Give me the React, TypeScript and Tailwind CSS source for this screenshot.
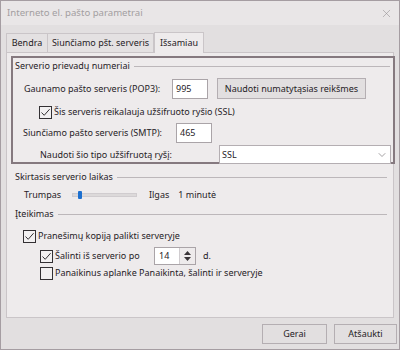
import { X, ChevronDown } from 'lucide-react'

const font = { fontFamily: '"Noto Sans", "Open Sans", sans-serif' }

function Check({ checked }: { checked: boolean }) {
  return (
    <span className="w-[13px] h-[13px] border border-[#333033] bg-[#f2f0f1] flex items-center justify-center shrink-0">
      {checked && (
        <svg width="11" height="11" viewBox="0 0 11 11">
          <path d="M1.5 5.5 L4.2 8.3 L9.6 2.2" fill="none" stroke="#333033" strokeWidth="1" />
        </svg>
      )}
    </span>
  )
}

function GroupHeader({ label }: { label: string }) {
  return (
    <div className="flex items-center h-[14px]">
      <span className="pr-[4px]">{label}</span>
      <span className="flex-1 border-t border-[#bcb7ba] mr-[3px]"></span>
    </div>
  )
}

export default function App() {
  return (
    <div
      style={font}
      className="w-[400px] h-[350px] border border-[#a59da2] bg-[#e2dfe0] flex flex-col text-[9px] text-[#262226] overflow-hidden whitespace-nowrap"
    >
      {/* Title bar */}
      <div className="h-[24px] bg-[#e9e6e7] flex items-center justify-between pl-[6px] pr-[6px] shrink-0">
        <span className="text-[9.6px] text-[#a39ea1]">Interneto el. pašto parametrai</span>
        <X size={13} strokeWidth={1} className="text-[#8e898c]" />
      </div>

      {/* Tabs */}
      <div className="flex items-end h-[27px] pl-[5px] shrink-0">
        <div className="w-[42px] h-[19px] border border-b-0 border-[#cac5c8] bg-[#e4e1e2] flex items-center justify-center">Bendra</div>
        <div className="w-[106px] h-[19px] border border-b-0 border-l-0 border-[#cac5c8] bg-[#e4e1e2] flex items-center justify-center">Siunčiamo pšt. serveris</div>
        <div className="w-[50px] h-[21px] border border-b-0 border-[#cac5c8] bg-[#eeebec] flex items-center justify-center -mb-px relative">Išsamiau</div>
      </div>

      {/* Tab panel */}
      <div className="mx-[5px] h-[266px] border border-[#cac5c8] bg-[#eeebec] pt-[3px] shrink-0">
        {/* Highlighted group */}
        <div className="ml-[4px] w-[384px] h-[108px] border-2 border-[#85797f] pt-[1px] pl-[2px]">
          <GroupHeader label="Serverio prievadų numeriai" />

          <div className="flex items-center h-[21px] mt-[5px] pl-[9px]">
            <span className="w-[148px]">Gaunamo pašto serveris (POP3):</span>
            <span className="w-[36px] h-[20px] border border-[#aaa4a8] bg-white flex items-center pl-[3px]">995</span>
            <button className="ml-[9px] w-[149px] h-[21px] border border-[#b4aeb2] bg-[#e2dfe0] flex items-center justify-center">
              Naudoti numatytąsias reikšmes
            </button>
          </div>

          <div className="flex items-center gap-[2px] h-[14px] mt-[6px] pl-[24px]">
            <Check checked />
            <span>Šis serveris reikalauja užšifruoto ryšio (SSL)</span>
          </div>

          <div className="flex items-center h-[20px] mt-[4px] pl-[8px]">
            <span className="w-[153px]">Siunčiamo pašto serveris (SMTP):</span>
            <span className="w-[36px] h-[20px] border border-[#aaa4a8] bg-white flex items-center pl-[3px]">465</span>
          </div>

          <div className="flex items-center h-[19px] mt-[2px] pl-[25px]">
            <span className="w-[179px]">Naudoti šio tipo užšifruotą ryšį:</span>
            <span className="w-[172px] h-[19px] border border-[#b4aeb2] bg-white flex items-center justify-between">
              <span className="pl-[2px]">SSL</span>
              <span className="w-[16px] h-full flex items-center justify-center">
                <ChevronDown size={12} strokeWidth={1} className="text-[#4a4548]" />
              </span>
            </span>
          </div>
        </div>

        {/* Timeout */}
        <div className="pl-[8px] pr-[3px] mt-[6px]">
          <GroupHeader label="Skirtasis serverio laikas" />
          <div className="flex items-center h-[16px] mt-[3px] pl-[9px]">
            <span className="w-[48px]">Trumpas</span>
            <span className="relative w-[65px] h-[4px] bg-[#dcd9da] border border-[#d0cccf]">
              <span className="absolute left-[5px] -top-[3px] w-[4px] h-[8px] bg-[#1c6fcf] rounded-[1px]"></span>
            </span>
            <span className="ml-[12px]">Ilgas</span>
            <span className="ml-[9px]">1 minutė</span>
          </div>
        </div>

        {/* Delivery */}
        <div className="pl-[8px] pr-[3px] mt-[4px]">
          <GroupHeader label="Įteikimas" />
          <div className="flex items-center gap-[2px] h-[14px] mt-[8px] pl-[8px]">
            <Check checked />
            <span>Pranešimų kopiją palikti serveryje</span>
          </div>
          <div className="flex items-center h-[18px] mt-[4px] pl-[25px]">
            <Check checked />
            <span className="ml-[2px] w-[99px]">Šalinti iš serverio po</span>
            <span className="w-[42px] h-[18px] border border-[#aaa4a8] bg-white flex">
              <span className="flex-1 flex items-center pl-[4px]">14</span>
              <span className="w-[16px] border-l border-[#d0cccf] bg-[#eeebec] flex flex-col items-center justify-center gap-[2px]">
                <svg width="7" height="4" viewBox="0 0 7 4"><path d="M0 4 L3.5 0 L7 4 Z" fill="#3a3538" /></svg>
                <svg width="7" height="4" viewBox="0 0 7 4"><path d="M0 0 L3.5 4 L7 0 Z" fill="#3a3538" /></svg>
              </span>
            </span>
            <span className="ml-[7px]">d.</span>
          </div>
          <div className="flex items-center gap-[2px] h-[14px] mt-[1px] pl-[25px]">
            <Check checked={false} />
            <span>Panaikinus aplanke Panaikinta, šalinti ir serveryje</span>
          </div>
        </div>
      </div>

      {/* Footer */}
      <div className="flex justify-end gap-[7px] pr-[2px] pt-[6px]">
        <button className="w-[65px] h-[20px] border border-[#b4aeb2] bg-[#e2dfe0] flex items-center justify-center">Gerai</button>
        <button className="w-[63px] h-[20px] border border-[#b4aeb2] bg-[#e2dfe0] flex items-center justify-center">Atšaukti</button>
      </div>
    </div>
  )
}
